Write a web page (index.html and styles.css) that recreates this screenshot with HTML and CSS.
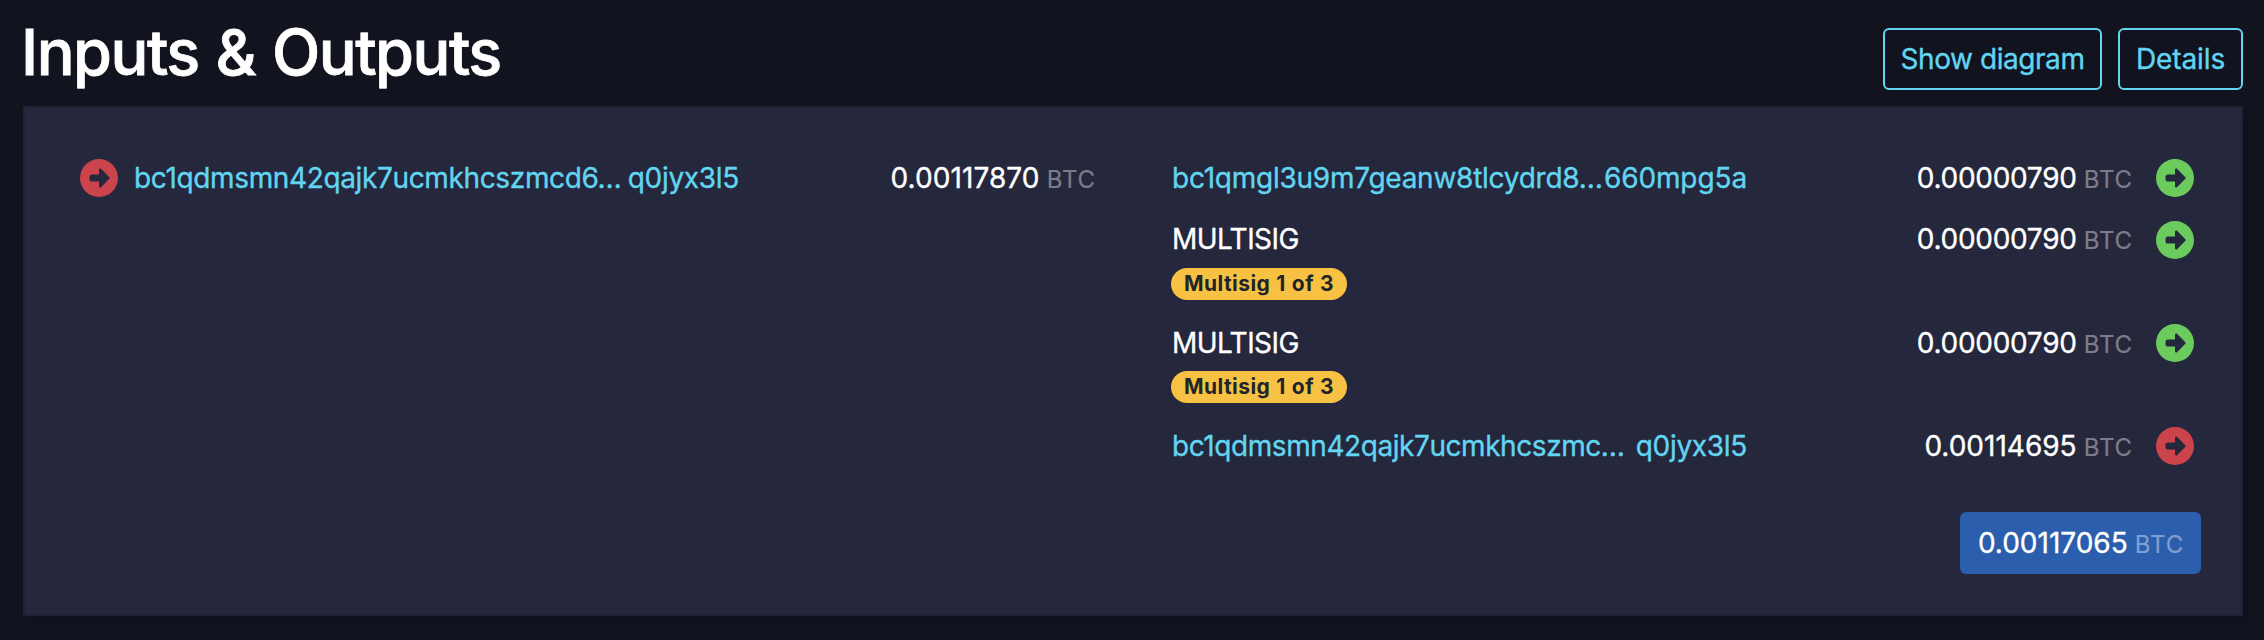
FILE: index.html
```html
<!DOCTYPE html>
<html lang="en">
<head>
<meta charset="utf-8">
<title>Inputs &amp; Outputs</title>
<link rel="stylesheet" href="styles.css">
</head>
<body>
<svg class="sprite" aria-hidden="true">
  <symbol id="circle-right" viewBox="0 0 512 512"><path d="M0 256a256 256 0 1 0 512 0A256 256 0 1 0 0 256zm395.3 11.3l-112 112c-4.6 4.6-11.5 5.9-17.4 3.5s-9.9-8.3-9.9-14.8l0-64-96 0c-17.7 0-32-14.3-32-32l0-32c0-17.7 14.3-32 32-32l96 0 0-64c0-6.5 3.9-12.3 9.9-14.9s12.9-1.1 17.4 3.5l112 112c6.2 6.2 6.2 16.4 0 22.6z"/></symbol>
</svg>
<header class="title">
  <h2>Inputs &amp; Outputs</h2>
  <div class="actions">
    <button class="btn diagram">Show diagram</button>
    <button class="btn details">Details</button>
  </div>
</header>
<main class="box">
  <div class="columns">
    <section class="inputs">
      <div class="row">
        <svg class="icon red"><use href="#circle-right"/></svg>
        <a class="address"><span class="first">bc1qdmsmn42qajk7ucmkhcszmcd6…</span><span class="last tight">q0jyx3l5</span></a>
        <span class="amount"><span class="n1">0.00117870</span><span class="unit">BTC</span></span>
      </div>
    </section>
    <section class="outputs">
      <div class="row">
        <a class="address"><span class="first out1">bc1qmgl3u9m7geanw8tlcydrd8…</span><span class="last">660mpg5a</span></a>
        <span class="amount"><span class="n2">0.00000790</span><span class="unit">BTC</span></span>
        <svg class="icon green"><use href="#circle-right"/></svg>
      </div>
      <div class="row raised">
        <span class="script">MULTISIG</span>
        <span class="amount"><span class="n2">0.00000790</span><span class="unit">BTC</span></span>
        <svg class="icon green"><use href="#circle-right"/></svg>
      </div>
      <div class="label"><span class="badge">Multisig 1 of 3</span></div>
      <div class="row">
        <span class="script">MULTISIG</span>
        <span class="amount"><span class="n2">0.00000790</span><span class="unit">BTC</span></span>
        <svg class="icon green"><use href="#circle-right"/></svg>
      </div>
      <div class="label"><span class="badge">Multisig 1 of 3</span></div>
      <div class="row">
        <a class="address"><span class="first out4">bc1qdmsmn42qajk7ucmkhcszmc…</span><span class="last tight">q0jyx3l5</span></a>
        <span class="amount"><span>0.00114695</span><span class="unit">BTC</span></span>
        <svg class="icon red"><use href="#circle-right"/></svg>
      </div>
    </section>
  </div>
  <div class="summary">
    <div class="total"><span>0.00117065</span><span class="unit">BTC</span></div>
  </div>
</main>
</body>
</html>
```
FILE: styles.css
```css
* { box-sizing: border-box; }
body {
  margin: 0;
  height: 640px;
  overflow: hidden;
  padding: 0 21px 0 23px;
  background: #11131f;
  color: #fff;
  font: 28px/42px Inter, sans-serif;
  -webkit-text-stroke: 0.35px;
}
.sprite { display: none; }
.title { display: flex; justify-content: space-between; height: 106px; }
.title h2 {
  margin: 13px 0 0 -2px;
  font-size: 63px;
  line-height: 78px;
  font-weight: 500;
  letter-spacing: -1.5px;
  word-spacing: 1.5px;
  -webkit-text-stroke: 0.8px;
}
.actions { display: flex; gap: 16px; padding-top: 28px; }
.btn {
  height: 62px;
  padding: 0;
  border: 2px solid #62d5f1;
  border-radius: 6px;
  background: none;
  color: #62d5f1;
  font: inherit;
  text-align: center;
}
.diagram { width: 219px; letter-spacing: -0.43px; }
.details { width: 125px; letter-spacing: -0.1px; }

.box {
  height: 510px;
  padding: 39px 47px 0 55px;
  border: 2px solid #202135;
  background: #25273c;
  box-shadow: 4px 4px 8px rgba(0, 0, 0, 0.15);
}
.columns { display: flex; justify-content: space-between; width: 2114px; }
.inputs { width: 1016px; }
.outputs { width: 1023px; }
.row { display: flex; align-items: center; height: 62px; }
.raised .script { margin-bottom: 2px; }
.raised .amount { margin-bottom: 1px; }
.icon { width: 38px; height: 38px; flex: none; }
.red { fill: #cb434b; }
.green { fill: #6bcb5d; }

.address {
  display: flex;
  justify-content: space-between;
  width: 575px;
  white-space: nowrap;
  color: #62d5f1;
}
.inputs .address { width: 605px; margin-left: 16px; }
.outputs .address, .script { margin-left: 1px; }
.first { letter-spacing: -0.36px; }
.out1 { letter-spacing: -0.25px; }
.out4 { letter-spacing: -0.43px; }
.last { letter-spacing: -0.11px; }
.tight { letter-spacing: -0.31px; }
.script { letter-spacing: -0.55px; }

.amount {
  display: flex;
  align-items: baseline;
  margin-left: auto;
  padding-top: 1px;
  white-space: nowrap;
}
.outputs .amount { margin-right: 23px; }
.n1 { letter-spacing: 0.1px; }
.n2 { letter-spacing: -0.28px; }
.unit {
  margin-left: 7px;
  font-size: 24px;
  letter-spacing: 0.9px;
  color: #7c7d89;
  -webkit-text-stroke: 0.2px;
}

.label { display: flex; height: 41px; align-items: flex-start; }
.badge {
  width: 176px;
  height: 32px;
  margin-top: -3px;
  border-radius: 16px;
  background: #f7c244;
  color: #212529;
  font-size: 21px;
  line-height: 32px;
  font-weight: 700;
  letter-spacing: 0.45px;
  word-spacing: 0.6px;
  text-align: center;
  -webkit-text-stroke: 0;
}

.summary { display: flex; justify-content: flex-end; padding: 35px 0 0; margin-right: -7px; }
.total {
  display: flex;
  justify-content: center;
  align-items: baseline;
  width: 241px;
  height: 62px;
  padding: 10px 0 0 1px;
  border-radius: 6px;
  background: #2b5eac;
}
.total .unit { color: #809ecd; }
```
